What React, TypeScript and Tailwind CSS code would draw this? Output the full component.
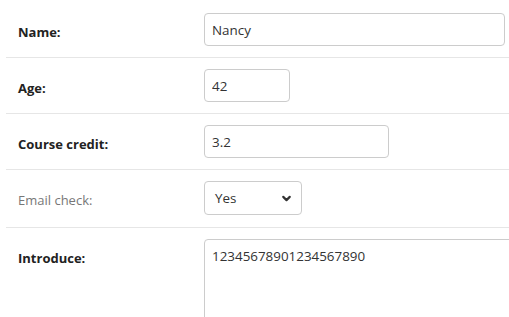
import { ChevronDown } from "lucide-react";

const rows = [
  { label: "Name:", kind: "text", value: "Nancy", width: "w-[301px]" },
  { label: "Age:", kind: "text", value: "42", width: "w-[86px]" },
  { label: "Course credit:", kind: "text", value: "3.2", width: "w-[185px]" },
];

export default function App() {
  return (
    <div
      className="h-[317px] w-[509px] overflow-hidden bg-white pl-[6px] text-[13px] text-[#333]"
      style={{ fontFamily: '"Open Sans", "Noto Sans", sans-serif' }}
    >
      {rows.map((r, i) => (
        <div key={r.label} className={`flex ${i > 0 ? "border-t border-[#e6e6e6]" : "pt-[2px]"}`}>
          <div className="w-[186px] shrink-0 pl-3 pt-[21px] font-bold leading-[18px] text-[#222]">{r.label}</div>
          <div className="py-[11px] pl-3">
            <input
              readOnly
              value={r.value}
              className={`${r.width} h-[33px] rounded-[4px] border border-[#cccccc] px-[7px] text-[13.4px] text-[#333] outline-none`}
            />
          </div>
        </div>
      ))}

      {/* Email check row */}
      <div className="flex border-t border-[#e6e6e6]">
        <div className="w-[186px] shrink-0 pl-3 pt-[21px] leading-[18px] text-[#777]">Email check:</div>
        <div className="py-[11px] pb-[12px] pl-3">
          <div className="flex h-[34px] w-[98px] items-center justify-between rounded-[4px] border border-[#cccccc] pl-[10px] pr-[8px] text-[13.4px]">
            <span>Yes</span>
            <ChevronDown size={13} strokeWidth={4} className="text-[#333]" />
          </div>
        </div>
      </div>

      {/* Introduce row */}
      <div className="flex border-t border-[#e6e6e6]">
        <div className="w-[186px] shrink-0 pl-3 pt-[21px] font-bold leading-[18px] text-[#222]">Introduce:</div>
        <div className="pt-[11px] pl-3">
          <textarea
            readOnly
            value="12345678901234567890"
            className="h-[110px] w-[340px] resize-none rounded-[4px] border border-[#cccccc] px-[7px] pt-[7px] text-[13.4px] leading-[18px] text-[#333] outline-none"
          />
        </div>
      </div>
    </div>
  );
}
